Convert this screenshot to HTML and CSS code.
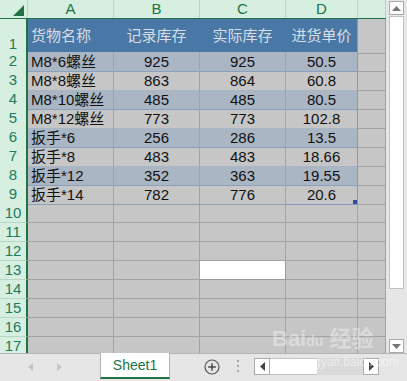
FILE: index.html
```html
<!DOCTYPE html>
<html lang="zh-CN">
<head>
    <meta charset="UTF-8">
    <title>Sheet1</title>
    <link rel="stylesheet" href="styles.css">
</head>
<body>

<div class="window">
    <div class="top">
        <div class="sheet">
            <div class="row colhead">
                <div class="corner"><span class="tri"></span></div>
                <div class="letter">A</div>
                <div class="letter">B</div>
                <div class="letter">C</div>
                <div class="letter">D</div>
                <div class="letter"></div>
            </div>

            <div class="row first">
                <div class="num bottom">1</div>
                <div class="cell th left">货物名称</div>
                <div class="cell th">记录库存</div>
                <div class="cell th">实际库存</div>
                <div class="cell th edge">进货单价</div>
                <div class="cell"></div>
            </div>
            <div class="row">
                <div class="num">2</div>
                <div class="cell t band left">M8*6螺丝</div>
                <div class="cell t band">925</div>
                <div class="cell t band">925</div>
                <div class="cell t band edge">50.5</div>
                <div class="cell"></div>
            </div>
            <div class="row">
                <div class="num">3</div>
                <div class="cell t left">M8*8螺丝</div>
                <div class="cell t">863</div>
                <div class="cell t">864</div>
                <div class="cell t edge">60.8</div>
                <div class="cell"></div>
            </div>
            <div class="row">
                <div class="num">4</div>
                <div class="cell t band left">M8*10螺丝</div>
                <div class="cell t band">485</div>
                <div class="cell t band">485</div>
                <div class="cell t band edge">80.5</div>
                <div class="cell"></div>
            </div>
            <div class="row">
                <div class="num">5</div>
                <div class="cell t left">M8*12螺丝</div>
                <div class="cell t">773</div>
                <div class="cell t">773</div>
                <div class="cell t edge">102.8</div>
                <div class="cell"></div>
            </div>
            <div class="row">
                <div class="num">6</div>
                <div class="cell t band left">扳手*6</div>
                <div class="cell t band">256</div>
                <div class="cell t band">286</div>
                <div class="cell t band edge">13.5</div>
                <div class="cell"></div>
            </div>
            <div class="row">
                <div class="num">7</div>
                <div class="cell t left">扳手*8</div>
                <div class="cell t">483</div>
                <div class="cell t">483</div>
                <div class="cell t edge">18.66</div>
                <div class="cell"></div>
            </div>
            <div class="row">
                <div class="num">8</div>
                <div class="cell t band left">扳手*12</div>
                <div class="cell t band">352</div>
                <div class="cell t band">363</div>
                <div class="cell t band edge">19.55</div>
                <div class="cell"></div>
            </div>
            <div class="row">
                <div class="num">9</div>
                <div class="cell t left">扳手*14</div>
                <div class="cell t">782</div>
                <div class="cell t">776</div>
                <div class="cell t edge last">20.6<span class="handle"></span></div>
                <div class="cell"></div>
            </div>

            <div class="row"><div class="num">10</div><div class="cell"></div><div class="cell"></div><div class="cell"></div><div class="cell"></div><div class="cell"></div></div>
            <div class="row"><div class="num">11</div><div class="cell"></div><div class="cell"></div><div class="cell"></div><div class="cell"></div><div class="cell"></div></div>
            <div class="row"><div class="num">12</div><div class="cell"></div><div class="cell"></div><div class="cell"></div><div class="cell"></div><div class="cell"></div></div>
            <div class="row"><div class="num">13</div><div class="cell"></div><div class="cell"></div><div class="cell active"></div><div class="cell"></div><div class="cell"></div></div>
            <div class="row"><div class="num">14</div><div class="cell"></div><div class="cell"></div><div class="cell"></div><div class="cell"></div><div class="cell"></div></div>
            <div class="row"><div class="num">15</div><div class="cell"></div><div class="cell"></div><div class="cell"></div><div class="cell"></div><div class="cell"></div></div>
            <div class="row"><div class="num">16</div><div class="cell"></div><div class="cell"></div><div class="cell"></div><div class="cell"></div><div class="cell"></div></div>
            <div class="row"><div class="num">17</div><div class="cell"></div><div class="cell"></div><div class="cell"></div><div class="cell"></div><div class="cell"></div></div>
        </div>

        <div class="vscroll">
            <div class="sbtn">
                <svg width="9" height="5" viewBox="0 0 9 5"><polygon points="0,5 9,5 4.5,0" fill="#777"/></svg>
            </div>
            <div class="vthumb"></div>
            <div class="vtrack"></div>
            <div class="sbtn">
                <svg width="9" height="5" viewBox="0 0 9 5"><polygon points="0,0 9,0 4.5,5" fill="#777"/></svg>
            </div>
        </div>
    </div>

    <div class="tabbar">
        <div class="nav">
            <svg width="5" height="8" viewBox="0 0 5 8"><polygon points="5,0 5,8 0,4" fill="#c4c4c4"/></svg>
            <svg width="5" height="8" viewBox="0 0 5 8"><polygon points="0,0 0,8 5,4" fill="#c4c4c4"/></svg>
        </div>
        <div class="tab">Sheet1</div>
        <svg class="add" width="16" height="16" viewBox="0 0 16 16">
            <circle cx="8" cy="8" r="7" fill="none" stroke="#555" stroke-width="1.2"/>
            <path d="M8 4.2v7.6M4.2 8h7.6" stroke="#444" stroke-width="1.4"/>
        </svg>
        <div class="dots"><span></span><span></span><span></span></div>
        <div class="hscroll">
            <div class="hbtn">
                <svg width="5" height="9" viewBox="0 0 5 9"><polygon points="5,0 5,9 0,4.5" fill="#444"/></svg>
            </div>
            <div class="hthumb"></div>
            <div class="htrack"></div>
            <div class="hbtn">
                <svg width="5" height="9" viewBox="0 0 5 9"><polygon points="0,0 0,9 5,4.5" fill="#444"/></svg>
            </div>
        </div>
    </div>

    <div class="mark">
        <span class="mark-logo">Bai<span class="paw">du</span> 经验</span>
        <span class="mark-url">jingyan.baidu.com</span>
    </div>
</div>

</body>
</html>
```

FILE: styles.css
```css
body {
    margin: 0;
    padding: 0;
    background-color: #e6e6e6;
    font-family: "Liberation Sans", "Noto Sans CJK SC", sans-serif;
}

.window {
    position: relative;
    width: 407px;
    height: 381px;
    overflow: hidden;
}

.top {
    display: flex;
    height: 353px;
}

.sheet {
    width: 386px;
    height: 353px;
    overflow: hidden;
    background-color: #c6c6c6;
}

.row {
    display: grid;
    grid-template-columns: 28px 86px 86px 86px 72px 28px;
    height: 19px;
}

.row.first {
    height: 33px;
}

.colhead {
    height: 19px;
    border-bottom: 2px solid #217346;
    box-sizing: border-box;
}

.corner {
    position: relative;
    background-color: #d6efe0;
    border-right: 1px solid #b9d6c4;
}

.tri {
    position: absolute;
    right: 3px;
    bottom: 2px;
    width: 0;
    height: 0;
    border-left: 11px solid transparent;
    border-bottom: 11px solid #217346;
}

.letter {
    background-color: #d6efe0;
    border-right: 1px solid #b9d6c4;
    color: #217346;
    font-size: 15px;
    line-height: 18px;
    text-align: center;
}

.num {
    background-color: #d6efe0;
    border-right: 2px solid #217346;
    border-bottom: 1px solid #b9d6c4;
    color: #1f7a5c;
    font-size: 15px;
    line-height: 18px;
    text-align: center;
}

.num.bottom {
    display: flex;
    align-items: flex-end;
    justify-content: center;
}

.cell {
    position: relative;
    border-right: 1px solid #a3a3a3;
    border-bottom: 1px solid #a3a3a3;
    color: #111;
    font-size: 15px;
    line-height: 19px;
    text-align: center;
    white-space: nowrap;
}

.cell.left {
    text-align: left;
    padding-left: 3px;
}

.th {
    background-color: #4a78a6;
    color: #d9dee5;
    line-height: 34px;
    border-right-color: #4a78a6;
    border-bottom-color: #7d98b8;
}

.t {
    border-bottom-color: #8ba1bb;
}

.band {
    background-color: #abb6c4;
}

.edge {
    border-right-color: #7e9bbf;
}

.last {
    border-bottom-color: #7e9bbf;
}

.handle {
    position: absolute;
    right: 0;
    bottom: 0;
    width: 4px;
    height: 4px;
    background-color: #2f4f9a;
}

.active {
    background-color: #fff;
    border-right-color: #999;
    border-bottom-color: #999;
}

.vscroll {
    display: flex;
    flex-direction: column;
    width: 21px;
    padding: 1px 3px 0 3px;
    box-sizing: border-box;
    background-color: #e6e6e6;
}

.sbtn {
    display: flex;
    align-items: center;
    justify-content: center;
    height: 14px;
    background-color: #fff;
    border: 1px solid #ababab;
    box-sizing: border-box;
}

.vthumb {
    height: 273px;
    margin-top: 1px;
    background-color: #fff;
    border: 1px solid #c2c2c2;
    box-sizing: border-box;
}

.vtrack {
    flex: 1;
}

.tabbar {
    display: flex;
    align-items: flex-start;
    height: 28px;
    background-color: #e6e6e6;
    border-top: 1px solid #b4b4b4;
    box-sizing: border-box;
}

.nav {
    display: flex;
    gap: 24px;
    width: 100px;
    padding: 9px 0 0 28px;
    box-sizing: border-box;
}

.tab {
    width: 68px;
    height: 24px;
    background-color: #fff;
    border-left: 1px solid #b4b4b4;
    border-right: 1px solid #b4b4b4;
    border-bottom: 2px solid #217346;
    margin-top: -1px;
    color: #217346;
    font-size: 14px;
    line-height: 24px;
    text-align: center;
    box-sizing: content-box;
}

.add {
    margin: 5px 0 0 34px;
}

.dots {
    display: flex;
    flex-direction: column;
    gap: 3px;
    margin: 6px 0 0 17px;
}

.dots span {
    width: 2px;
    height: 2px;
    background-color: #a8a8a8;
}

.hscroll {
    display: flex;
    width: 125px;
    height: 17px;
    margin: 4px 0 0 15px;
}

.hbtn {
    display: flex;
    align-items: center;
    justify-content: center;
    width: 16px;
    background-color: #fff;
    border: 1px solid #ababab;
    box-sizing: border-box;
}

.hthumb {
    width: 47px;
    background-color: #fff;
    border-top: 1px solid #c2c2c2;
    border-bottom: 1px solid #c2c2c2;
    box-sizing: border-box;
}

.htrack {
    flex: 1;
    background-color: #dadada;
}

.mark {
    position: absolute;
    left: 272px;
    top: 326px;
    display: flex;
    flex-direction: column;
    pointer-events: none;
}

.mark-logo {
    color: rgba(255, 255, 255, 0.4);
    font-size: 22px;
    font-weight: bold;
    line-height: 26px;
}

.paw {
    font-size: 14px;
}

.mark-url {
    margin-left: 30px;
    color: rgba(255, 255, 255, 0.5);
    font-size: 12px;
    line-height: 16px;
}
```
